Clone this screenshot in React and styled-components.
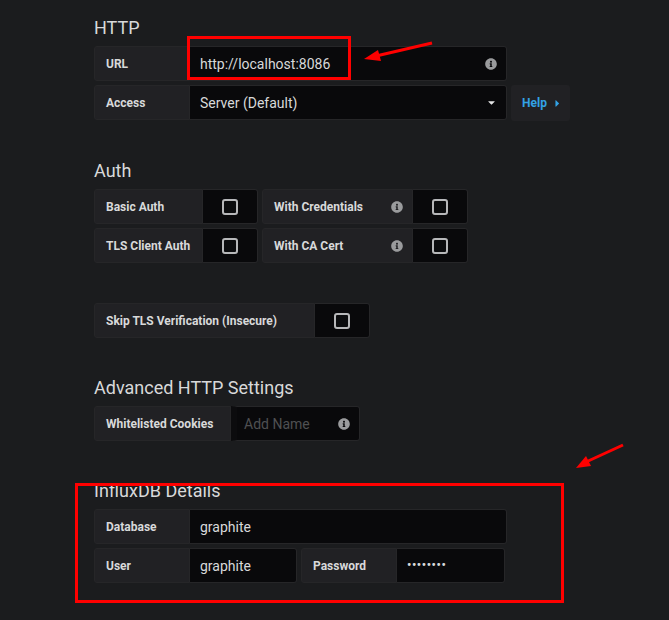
import React from 'react'
import styled, { createGlobalStyle } from 'styled-components'
import { FaInfoCircle, FaCaretDown, FaCaretRight } from 'react-icons/fa'

const GlobalStyle = createGlobalStyle`
    html, body {
        margin: 0;
        padding: 0;
        background: #1b1c1e;
    }
    body {
        font-family: Roboto, "Liberation Sans", sans-serif;
        color: #d8d9da;
    }
`

function InfoIcon() {
    return <FaInfoCircle size={12} color="#9a9b9d" />
}

function Check() {
    return (
        <CheckCell>
            <Box />
        </CheckCell>
    )
}

function App() {
    return (
        <Page>
            <GlobalStyle />

            <Section>
                <Heading>HTTP</Heading>
                <Group>
                    <Row>
                        <Pair>
                            <Label width={96}>URL</Label>
                            <Input width={317}>
                                <span>http://localhost:8086</span>
                                <InfoIcon />
                            </Input>
                        </Pair>
                    </Row>
                    <Row>
                        <Pair>
                            <Label width={96}>Access</Label>
                            <Input width={317}>
                                <span>Server (Default)</span>
                                <FaCaretDown size={11} color="#e3e4e5" />
                            </Input>
                        </Pair>
                        <HelpButton>
                            Help <FaCaretRight size={11} />
                        </HelpButton>
                    </Row>
                </Group>
            </Section>

            <Section>
                <Heading>Auth</Heading>
                <Group>
                    <Row>
                        <Pair>
                            <Label width={109}>Basic Auth</Label>
                            <Check />
                        </Pair>
                        <Pair>
                            <Label width={151}>
                                With Credentials <InfoIcon />
                            </Label>
                            <Check />
                        </Pair>
                    </Row>
                    <Row>
                        <Pair>
                            <Label width={109}>TLS Client Auth</Label>
                            <Check />
                        </Pair>
                        <Pair>
                            <Label width={151}>
                                With CA Cert <InfoIcon />
                            </Label>
                            <Check />
                        </Pair>
                    </Row>
                </Group>
            </Section>

            <Section>
                <Group>
                    <Row>
                        <Pair>
                            <Label width={221}>Skip TLS Verification (Insecure)</Label>
                            <Check />
                        </Pair>
                    </Row>
                </Group>
            </Section>

            <Section>
                <Heading>Advanced HTTP Settings</Heading>
                <Group>
                    <Row>
                        <Pair>
                            <Label width={137}>Whitelisted Cookies</Label>
                            <Input width={129} inset>
                                <Placeholder>Add Name</Placeholder>
                                <InfoIcon />
                            </Input>
                        </Pair>
                    </Row>
                </Group>
            </Section>

            <Section>
                <Heading>InfluxDB Details</Heading>
                <Group>
                    <Row>
                        <Pair>
                            <Label width={96}>Database</Label>
                            <Input width={317}>graphite</Input>
                        </Pair>
                    </Row>
                    <Row>
                        <Pair>
                            <Label width={96}>User</Label>
                            <Input width={107}>graphite</Input>
                        </Pair>
                        <Pair>
                            <Label width={96}>Password</Label>
                            <Input width={108}>
                                <Dots>••••••••</Dots>
                            </Input>
                        </Pair>
                    </Row>
                </Group>
            </Section>

            {/* red annotation marks drawn on top of the form */}
            <Marks viewBox="0 0 669 620" width="669" height="620">
                <rect x="188.5" y="37.5" width="161" height="41" fill="none" stroke="#ff0000" strokeWidth="3" />
                <line x1="432" y1="43" x2="376" y2="56" stroke="#ff0000" strokeWidth="3" />
                <polygon points="364,59 378,50 381,61" fill="#ff0000" />
                <rect x="76.5" y="484.5" width="486" height="117" fill="none" stroke="#ff0000" strokeWidth="3" />
                <line x1="623" y1="445" x2="586" y2="462" stroke="#ff0000" strokeWidth="3" />
                <polygon points="576,468 586,456 591,466" fill="#ff0000" />
            </Marks>
        </Page>
    )
}

export default App

const Page = styled.div`
    position: relative;
    width: 669px;
    height: 620px;
    overflow: hidden;
    padding: 18px 0 0 94px;
    box-sizing: border-box;
`

const Section = styled.div`
    & + & {
        margin-top: 40px;
    }
`

const Heading = styled.h3`
    margin: 0 0 8px;
    font-size: 18px;
    line-height: 20px;
    font-weight: 400;
    color: #d8d9da;
`

const Group = styled.div`
    display: flex;
    flex-direction: column;
    gap: 4px;
`

const Row = styled.div`
    display: flex;
    gap: 4px;
`

const Pair = styled.div`
    display: flex;
`

const Label = styled.div`
    width: ${p => p.width}px;
    height: 35px;
    box-sizing: border-box;
    padding: 0 9px 0 11px;
    display: flex;
    align-items: center;
    justify-content: space-between;
    background: #212124;
    border: 1px solid #262628;
    border-radius: 3px 0 0 3px;
    font-size: 12px;
    font-weight: 700;
    color: #d8d9da;
    white-space: nowrap;
`

const Input = styled.div`
    width: ${p => p.width}px;
    height: 35px;
    box-sizing: border-box;
    padding: 0 9px 0 ${p => (p.inset ? 7 : 10)}px;
    display: flex;
    align-items: center;
    justify-content: space-between;
    background: #09090b;
    border: 1px solid #262628;
    border-left: ${p => (p.inset ? '6px solid #0c0c0e' : 'none')};
    border-radius: 0 3px 3px 0;
    font-size: 14px;
    color: #d8d9da;
    white-space: nowrap;
`

const Placeholder = styled.span`
    color: #4f5052;
`

const Dots = styled.span`
    font-size: 12px;
    font-weight: 700;
    letter-spacing: 0.6px;
    margin-top: -1px;
`

const CheckCell = styled.div`
    width: 55px;
    height: 35px;
    box-sizing: border-box;
    display: flex;
    align-items: center;
    justify-content: center;
    background: #09090b;
    border: 1px solid #262628;
    border-left: none;
    border-radius: 0 3px 3px 0;
`

const Box = styled.div`
    width: 16px;
    height: 16px;
    box-sizing: border-box;
    border: 2px solid #b7b8ba;
    border-radius: 3px;
    background: #0b0c0e;
`

const HelpButton = styled.div`
    width: 59px;
    height: 36px;
    box-sizing: border-box;
    padding-left: 11px;
    display: flex;
    align-items: center;
    gap: 5px;
    background: #212124;
    border-radius: 3px;
    font-size: 12px;
    font-weight: 700;
    color: #33a2e5;
`

const Marks = styled.svg`
    position: absolute;
    top: 0;
    left: 0;
    pointer-events: none;
`
